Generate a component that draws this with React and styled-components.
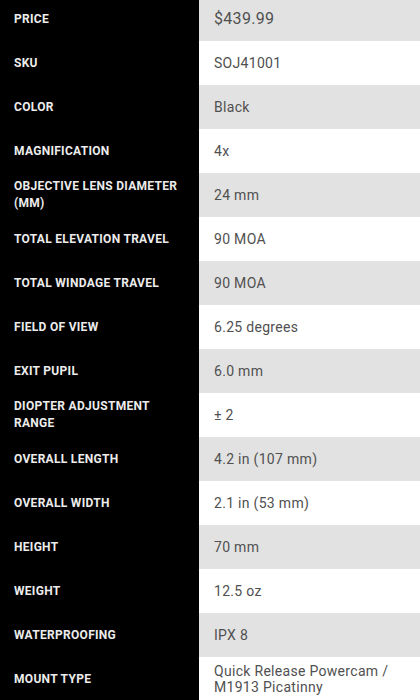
import React from "react";
import styled, { createGlobalStyle } from "styled-components";

const GlobalStyle = createGlobalStyle`
  html, body {
    margin: 0;
    padding: 0;
    background: #fff;
  }
  body {
    font-family: "Roboto", "Liberation Sans", sans-serif;
    overflow: hidden;
  }
`;

const specs = [
  ["Price", "$439.99"],
  ["SKU", "SOJ41001"],
  ["Color", "Black"],
  ["Magnification", "4x"],
  ["Objective Lens Diameter (mm)", "24 mm"],
  ["Total Elevation Travel", "90 MOA"],
  ["Total Windage Travel", "90 MOA"],
  ["Field of View", "6.25 degrees"],
  ["Exit Pupil", "6.0 mm"],
  ["Diopter Adjustment Range", "± 2"],
  ["Overall Length", "4.2 in (107 mm)"],
  ["Overall Width", "2.1 in (53 mm)"],
  ["Height", "70 mm"],
  ["Weight", "12.5 oz"],
  ["Waterproofing", "IPX 8"],
  ["Mount Type", "Quick Release Powercam / M1913 Picatinny"],
];

const Table = styled.div`
  display: flex;
  flex-direction: column;
  margin-top: -3px;
`;

const Row = styled.div`
  display: flex;
  height: 44px;
`;

const Label = styled.div`
  width: 199px;
  flex-shrink: 0;
  box-sizing: border-box;
  padding: 0 14px;
  background: #000;
  color: #ececec;
  display: flex;
  align-items: center;
  font-weight: 700;
  font-size: 12px;
  line-height: 17px;
  text-transform: uppercase;
  letter-spacing: 0.3px;
`;

const Value = styled.div`
  flex: 1;
  box-sizing: border-box;
  padding: 0 14px 0 15px;
  background: ${(p) => (p.$shade ? "#e2e2e2" : "#fff")};
  color: #505050;
  display: flex;
  align-items: center;
  font-size: ${(p) => (p.$large ? "16px" : "14px")};
  line-height: 16px;
  letter-spacing: 0.3px;
`;

export default function App() {
  return (
    <>
      <GlobalStyle />
      <Table>
        {specs.map(([label, value], i) => (
          <Row key={label}>
            <Label>{label}</Label>
            <Value $shade={i % 2 === 0} $large={i === 0}>
              {value}
            </Value>
          </Row>
        ))}
      </Table>
    </>
  );
}
